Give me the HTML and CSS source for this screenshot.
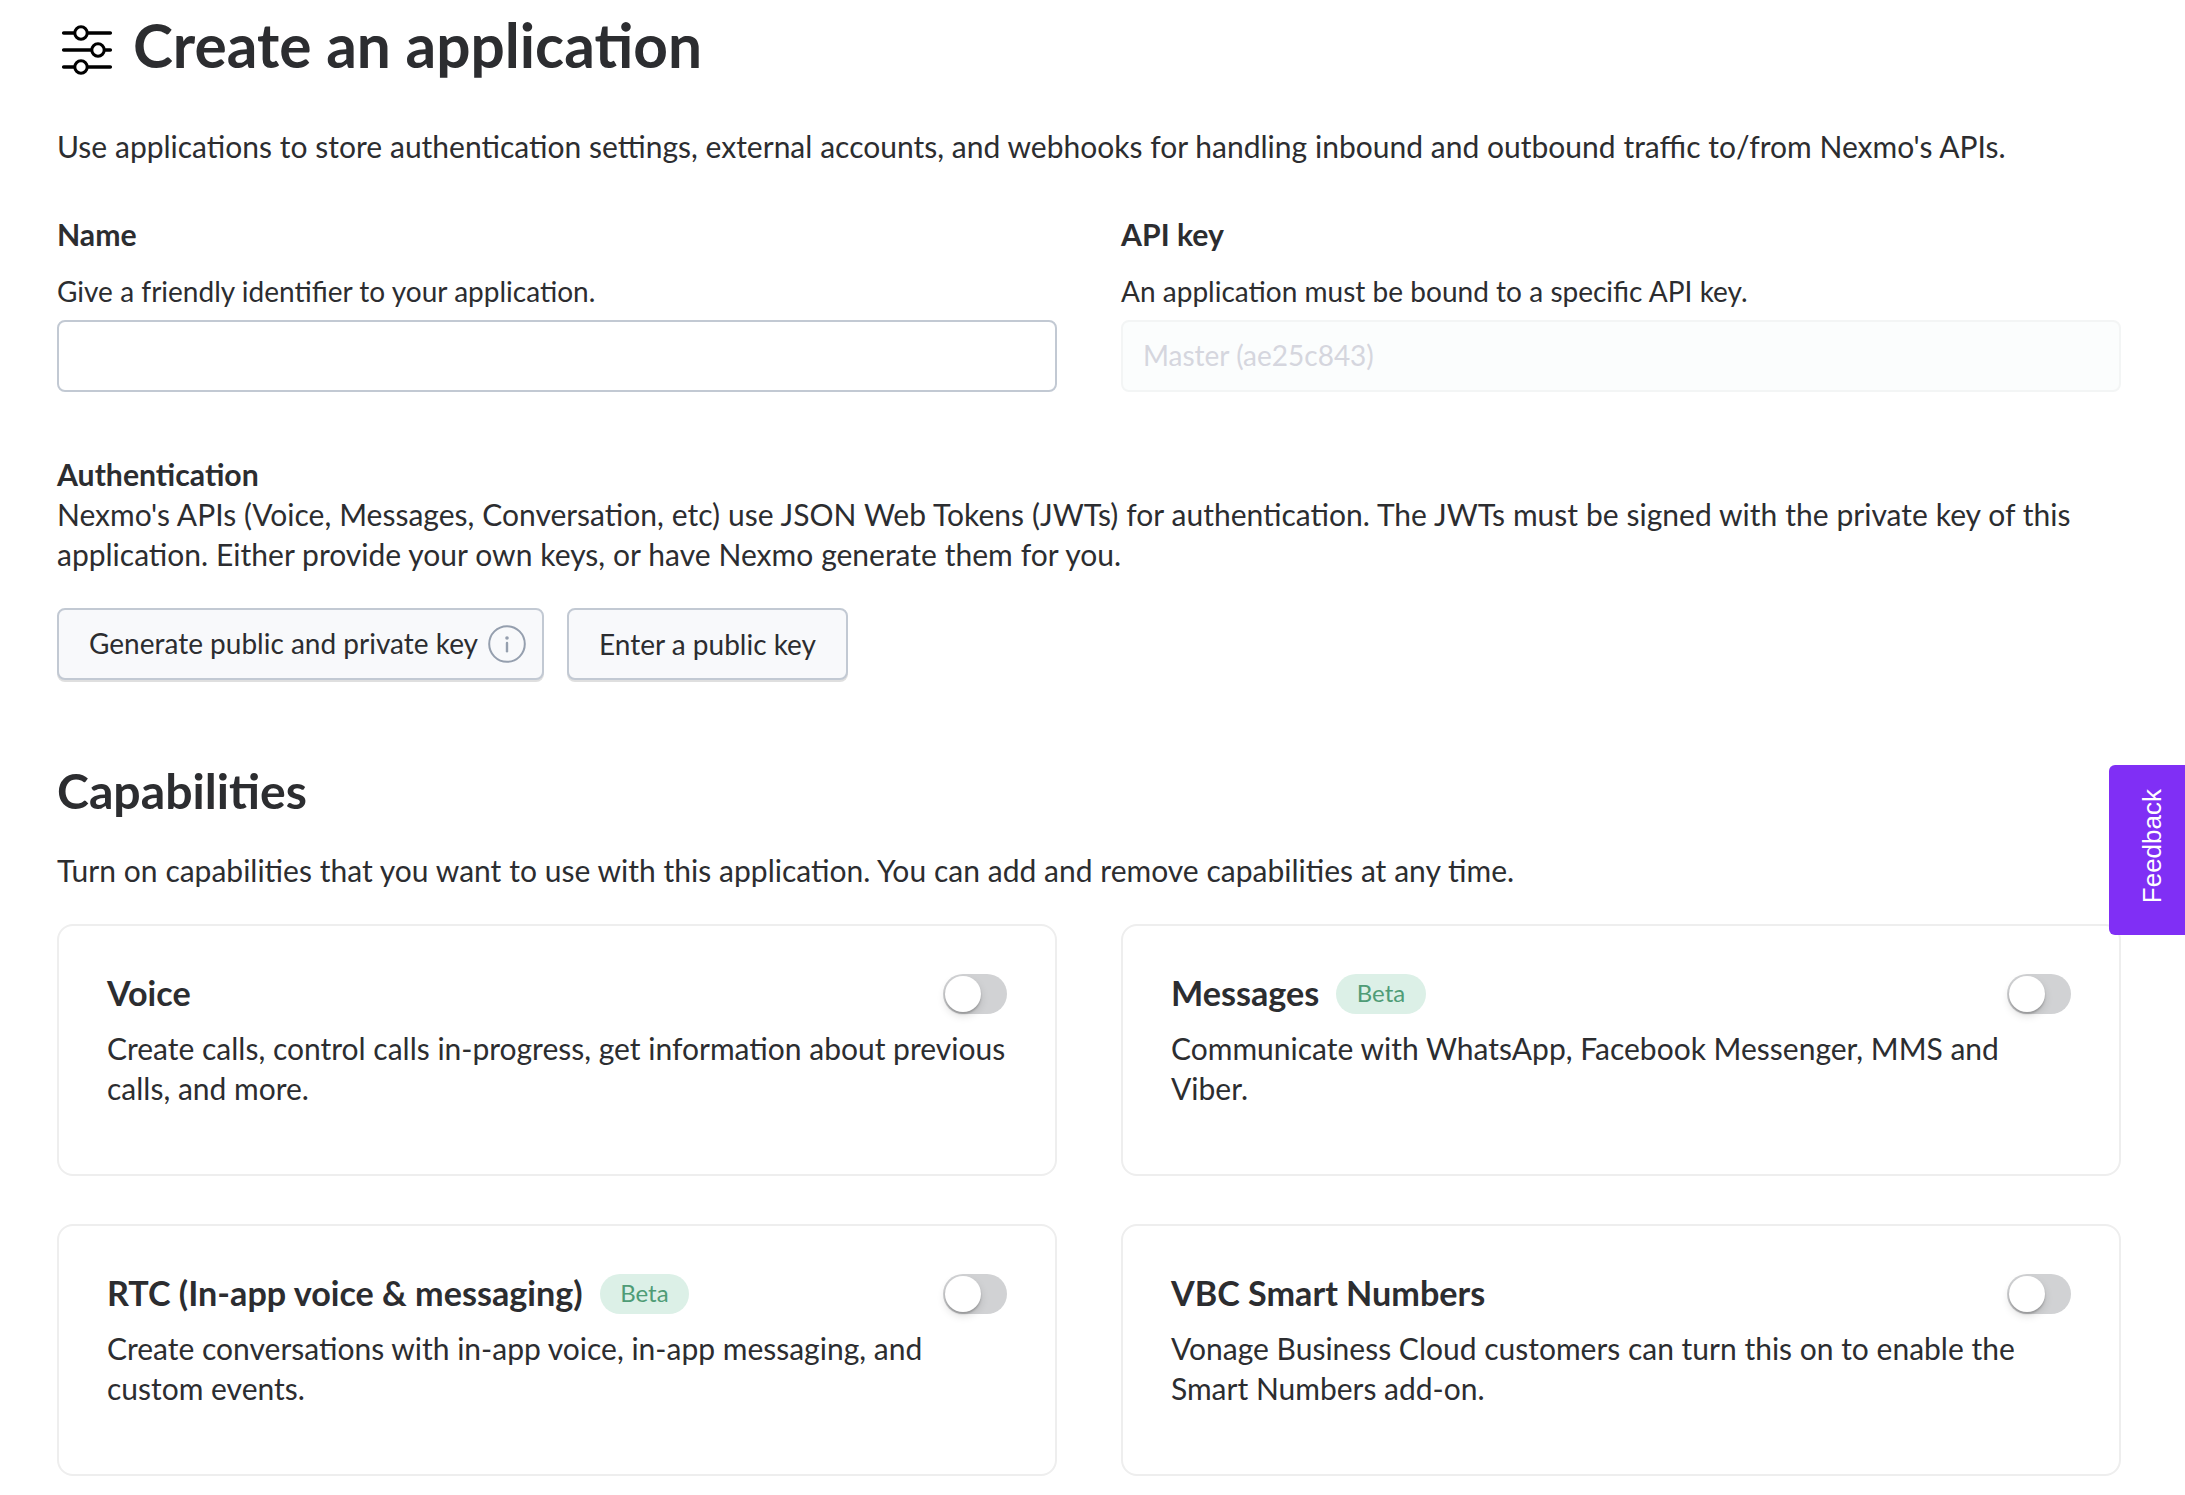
FILE: index.html
```html
<!DOCTYPE html>
<html lang="en">
<head>
<meta charset="utf-8">
<title>Create an application</title>
<link rel="stylesheet" href="styles.css">
</head>
<body>
<main class="page">
  <header class="title">
    <svg class="title-icon" width="52" height="52" viewBox="0 0 52 52" fill="none" stroke="#000" stroke-width="3.6" stroke-linecap="round">
      <path d="M2.7 9H13M27 9H49.3M2.7 26H30M44 26H49.3M2.7 43H13M27 43H49.3"/>
      <circle cx="20" cy="9" r="6.2" stroke-width="3"/>
      <circle cx="37" cy="26" r="6.2" stroke-width="3"/>
      <circle cx="20" cy="43" r="6.2" stroke-width="3"/>
    </svg>
    <h1>Create an application</h1>
  </header>
  <p class="intro">Use applications to store authentication settings, external accounts, and webhooks for handling inbound and outbound traffic to/from Nexmo's APIs.</p>

  <section class="columns fields">
    <div class="field">
      <label class="label" for="name">Name</label>
      <p class="hint">Give a friendly identifier to your application.</p>
      <input class="input" id="name" type="text">
    </div>
    <div class="field">
      <label class="label" for="key">API key</label>
      <p class="hint">An application must be bound to a specific API key.</p>
      <input class="input" id="key" type="text" value="Master (ae25c843)" disabled>
    </div>
  </section>

  <section class="auth">
    <h3 class="label">Authentication</h3>
    <p class="auth-text">Nexmo's APIs (Voice, Messages, Conversation, etc) use JSON Web Tokens (JWTs) for authentication. The JWTs must be signed with the private key of this application. Either provide your own keys, or have Nexmo generate them for you.</p>
    <div class="buttons">
      <button class="button button-info" type="button"><span>Generate public and private key</span>
        <svg width="38" height="38" viewBox="0 0 38 38" fill="none" stroke="#959fae" stroke-width="2">
          <circle cx="19" cy="19" r="17.8"/>
          <path d="M19 17.9V26.2" stroke-width="2.4" stroke-linecap="round"/>
          <circle cx="19" cy="13" r="1.8" fill="#959fae" stroke="none"/>
        </svg>
      </button>
      <button class="button" type="button"><span>Enter a public key</span></button>
    </div>
  </section>

  <section class="capabilities">
    <h2>Capabilities</h2>
    <p>Turn on capabilities that you want to use with this application. You can add and remove capabilities at any time.</p>
    <div class="columns cards">
      <article class="card">
        <div class="card-head"><h4>Voice</h4><span class="toggle"></span></div>
        <p>Create calls, control calls in-progress, get information about previous calls, and more.</p>
      </article>
      <article class="card">
        <div class="card-head"><h4>Messages</h4><span class="badge">Beta</span><span class="toggle"></span></div>
        <p>Communicate with WhatsApp, Facebook Messenger, MMS and Viber.</p>
      </article>
      <article class="card">
        <div class="card-head"><h4>RTC (In-app voice &amp; messaging)</h4><span class="badge">Beta</span><span class="toggle"></span></div>
        <p>Create conversations with in-app voice, in-app messaging, and custom events.</p>
      </article>
      <article class="card">
        <div class="card-head"><h4>VBC Smart Numbers</h4><span class="toggle"></span></div>
        <p>Vonage Business Cloud customers can turn this on to enable the Smart Numbers add-on.</p>
      </article>
    </div>
  </section>
</main>
<aside class="feedback"><span>Feedback</span></aside>
</body>
</html>
```

FILE: styles.css
```css
* {
  box-sizing: border-box;
}

body {
  margin: 0;
  background: #fff;
  color: #2c2d30;
  font-family: Lato, "Liberation Sans", sans-serif;
  font-size: 30px;
  line-height: 40px;
}

h1, h2, h3, h4, p {
  margin: 0;
}

.page {
  width: 2064px;
  margin-left: 57px;
  padding-top: 5px;
}

.title {
  display: flex;
  align-items: center;
  height: 80px;
  padding-left: 4px;
}

.title-icon {
  margin: 10px 20px 0 0;
}

h1 {
  font-size: 60.4px;
  line-height: 80px;
}

.intro {
  margin-top: 41px;
  white-space: nowrap;
  word-spacing: .12px;
}

.columns {
  display: grid;
  grid-template-columns: 1000px 1000px;
  column-gap: 64px;
}

.fields {
  margin-top: 48px;
}

.label {
  display: block;
  font-size: 30.2px;
  font-weight: 700;
}

.hint {
  margin: 17px 0 9px;
  font-size: 28px;
  word-spacing: .1px;
}

.input {
  display: block;
  width: 100%;
  height: 72px;
  padding: 0 20px 2px;
  border: 2px solid #c2c9d3;
  border-radius: 8px;
  background: #fff;
  color: inherit;
  font: 28px Lato, sans-serif;
}

.input:disabled {
  border-color: #f3f5f5;
  background: #fbfdfd;
  color: #d5d6de;
}

.auth {
  margin-top: 62px;
}

.auth-text {
  word-spacing: .25px;
}

.buttons {
  display: flex;
  gap: 23px;
  margin-top: 34px;
}

.button {
  display: flex;
  align-items: center;
  height: 72px;
  padding: 0 30px;
  border: 2px solid #c2c9d3;
  border-radius: 8px;
  background: #f8f9fb;
  box-shadow: 0 2px 0 #dfdfdf;
  color: #2c2d30;
  font: 28px/40px Lato, sans-serif;
}

.button-info {
  gap: 10px;
  padding-right: 16px;
}

.button-info span {
  padding-bottom: 2px;
}

.capabilities {
  margin-top: 79px;
}

h2 {
  margin-bottom: 29px;
  font-size: 48.2px;
  line-height: 62px;
}

.capabilities > p {
  word-spacing: .15px;
}

.cards {
  grid-auto-rows: 252px;
  row-gap: 48px;
  margin-top: 34px;
}

.card {
  padding: 48px;
  border: 2px solid #eee;
  border-radius: 16px;
}

.card-head {
  display: flex;
  height: 40px;
  margin-bottom: 14px;
}

h4 {
  font-size: 34.15px;
  line-height: 38px;
}

.badge {
  height: 40px;
  margin-left: 17px;
  padding: 0 20.5px;
  border-radius: 20px;
  background: #dcf0e7;
  color: #4f9c76;
  font-size: 24px;
  line-height: 38px;
}

.toggle {
  display: flex;
  width: 64px;
  height: 40px;
  margin-left: auto;
  padding: 2px;
  border-radius: 20px;
  background: #d1d2d4;
}

.toggle::before {
  content: "";
  width: 36px;
  height: 36px;
  border-radius: 50%;
  background: #fff;
  box-shadow: 0 2px 2px rgba(0, 0, 0, .2), 0 4px 8px rgba(0, 0, 0, .13);
}

.feedback {
  position: fixed;
  top: 765px;
  right: 0;
  display: flex;
  align-items: center;
  justify-content: center;
  width: 76px;
  height: 170px;
  padding: 0 0 7px 10px;
  border-radius: 6px 0 0 6px;
  background: #802ff5;
  color: #fff;
  font: 26px/30px "Liberation Sans", sans-serif;
}

.feedback span {
  writing-mode: vertical-rl;
  transform: rotate(180deg);
}
```
